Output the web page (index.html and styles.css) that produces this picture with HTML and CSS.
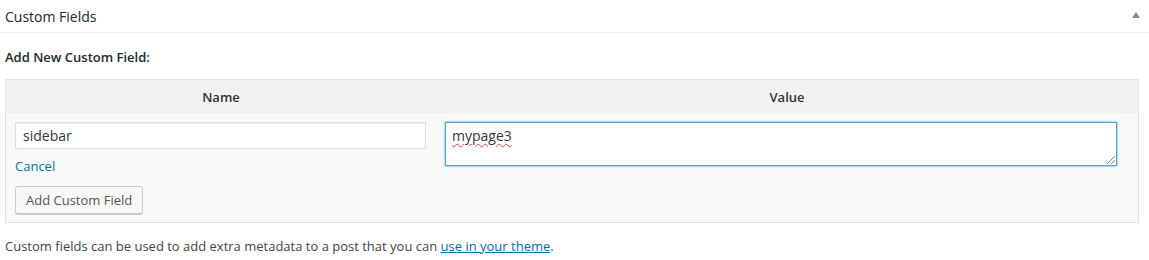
FILE: index.html
```html
<!DOCTYPE html>
<html lang="en">
<head>
  <meta charset="UTF-8">
  <title>Custom Fields</title>
  <link rel="stylesheet" href="styles.css">
</head>
<body>
  <div class="postbox">
    <div class="hndle">
      <h3>Custom Fields</h3>
      <span class="toggle"></span>
    </div>
    <div class="inside">
      <p class="add-new">Add New Custom Field:</p>
      <div class="newmeta">
        <div class="head">
          <div class="col-name">Name</div>
          <div class="col-value">Value</div>
        </div>
        <div class="body">
          <div class="col-name">
            <input type="text" class="meta-key" value="sidebar">
            <a href="#" class="cancel">Cancel</a>
            <button class="button">Add Custom Field</button>
          </div>
          <div class="col-value">
            <div class="meta-value"><span class="typo">mypage3</span><span class="grip"></span></div>
          </div>
        </div>
      </div>
      <p class="note">Custom fields can be used to add extra metadata to a post that you can <a href="#">use in your theme</a>.</p>
    </div>
  </div>
</body>
</html>
```

FILE: styles.css
```css
html, body {
  margin: 0;
  padding: 0;
  background: #ffffff;
  font-family: 'Open Sans', sans-serif;
  font-size: 13px;
  color: #444444;
}

.postbox {
  width: 1149px;
}

.hndle {
  display: flex;
  justify-content: space-between;
  align-items: center;
  height: 32px;
  border-bottom: 1px solid #eeeeee;
  padding: 0 9px 0 5px;
}

.hndle h3 {
  margin: 0;
  font-size: 14px;
  font-weight: 400;
  color: #23282d;
}

.toggle {
  width: 0;
  height: 0;
  border-left: 4px solid transparent;
  border-right: 4px solid transparent;
  border-bottom: 6px solid #888888;
  margin-top: -2px;
}

.inside {
  padding: 0 10px 0 5px;
}

.add-new {
  margin: 0;
  padding-top: 15px;
  height: 31px;
  font-weight: 600;
  color: #23282d;
}

.newmeta {
  border: 1px solid #e1e1e1;
  background: #f9f9f9;
  height: 142px;
}

.head {
  display: flex;
  background: #f1f1f1;
  height: 33px;
  align-items: center;
  font-weight: 600;
  color: #333333;
}

.col-name {
  box-sizing: border-box;
  width: 430px;
  text-align: center;
}

.col-value {
  flex: 1;
  text-align: center;
}

.body {
  display: flex;
  padding-top: 9px;
}

.body .col-name {
  display: flex;
  flex-direction: column;
  align-items: flex-start;
  padding-left: 9px;
  text-align: left;
}

.meta-key {
  box-sizing: border-box;
  width: 411px;
  height: 27px;
  border: 1px solid #dddddd;
  box-shadow: inset 0 1px 2px rgba(0, 0, 0, 0.07);
  padding: 0 7px;
  font-family: 'Open Sans', sans-serif;
  font-size: 14px;
  color: #32373c;
  background: #ffffff;
}

.cancel {
  color: #0073aa;
  text-decoration: none;
  margin-top: 9px;
  line-height: 17px;
}

.button {
  margin-top: 11px;
  height: 28px;
  padding: 0 10px 1px;
  border: 1px solid #cccccc;
  border-radius: 3px;
  background: #f7f7f7;
  box-shadow: 0 1px 0 #cccccc;
  font-family: 'Open Sans', sans-serif;
  font-size: 13px;
  color: #555555;
}

.body .col-value {
  text-align: left;
  padding-left: 9px;
  padding-right: 21px;
}

.meta-value {
  position: relative;
  box-sizing: border-box;
  height: 44px;
  border: 1px solid #5b9dd9;
  box-shadow: 0 0 2px rgba(30, 140, 190, 0.8);
  background: #ffffff;
  padding: 3px 6px;
  font-size: 14px;
  color: #32373c;
}

.typo {
  text-decoration: underline wavy #e04040;
  text-decoration-thickness: 1px;
  text-underline-offset: 2px;
}

.grip {
  position: absolute;
  right: 1px;
  bottom: 1px;
  width: 8px;
  height: 8px;
  background: linear-gradient(135deg, transparent 45%, #888888 45%, #888888 52%, transparent 52%, transparent 70%, #888888 70%, #888888 77%, transparent 77%);
}

.note {
  margin: 14px 0 0;
  color: #444444;
}

.note a {
  color: #0073aa;
}
```
